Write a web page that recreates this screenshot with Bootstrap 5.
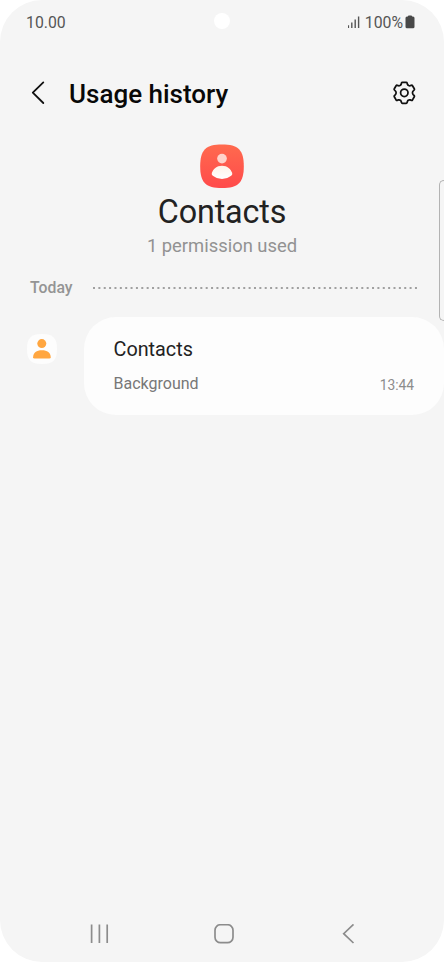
<!DOCTYPE html>
<html lang="en">
<head>
<meta charset="utf-8">
<meta name="viewport" content="width=device-width, initial-scale=1">
<title>Usage history</title>
<link rel="stylesheet" href="https://cdn.jsdelivr.net/npm/bootstrap@5.3.0/dist/css/bootstrap.min.css">
<style>
body{background:#fff;font-family:Roboto,sans-serif;color:#222}
svg{display:block;flex:none}
.screen{width:444px;height:962px;background:#f5f5f5;border-radius:42px}
.status-bar{height:43px;padding:1px 29px 0 26px;font-size:15.8px;line-height:20px;color:#555}
.clock,.status-level{padding-top:1px}
.status-level{margin:0 2px 0 5px}
.camera{width:16px;height:16px;left:214px;top:13px}
.title-bar{height:60px;margin-top:20px;padding:0 28px 0 31px}
.title-bar h1{font-size:26px;line-height:30px;color:#080808;margin-left:24px;padding-top:1px}
.app-icon{margin-top:21px}
.app-name{font-size:32.3px;line-height:40px;letter-spacing:-.15px;margin-top:4px}
.app-note{font-size:18.4px;line-height:24px;color:#929292;margin-top:2px}
.day-row{height:24px;margin-top:18px;padding:0 27px 0 30px}
.day-label{font-size:15.8px;line-height:24px;color:#949494}
.entry-row{margin-top:17px;padding-left:27px}
.entry-icon{margin-top:17px}
.entry{width:360px;height:98px;border-radius:32px;background:#fdfdfd;padding:20px 30px 0 29.5px}
.entry-name{font-size:19.8px;line-height:26px}
.entry-detail{margin-top:11px}
.entry-kind{font-size:16px;line-height:20px;color:#777}
.entry-time{font-size:13.8px;line-height:20px;color:#8c8c8c;padding-top:1px}
.edge-handle{width:5px;height:141px;left:439px;top:180px;border:1px solid #b3b3b3;border-right:0;border-radius:6px 0 0 6px}
.nav-keys{height:56px;padding:0 89px}
.home-key{margin-right:4px}
</style>
</head>
<body>
<main class="screen position-relative overflow-hidden d-flex flex-column">
  <div class="status-bar d-flex align-items-center justify-content-between">
    <span class="clock">10.00</span>
    <div class="d-flex align-items-center">
      <svg width="12" height="13" viewBox="0 0 12 13" stroke="#555" stroke-width="1.4"><path d="M.4 9.2V12M3.800 6.500V12M7.200 3.500V12M10.600 .5V12"/></svg>
      <span class="status-level">100%</span>
      <svg width="10" height="14" viewBox="0 0 10 14" fill="#484848"><path d="M3 1.2Q3 .4 3.8 .4H6.2Q7 .4 7 1.2V1.6H8Q9.5 1.6 9.5 3.1V11.7Q9.5 13.2 8 13.2H2Q.5 13.2 .5 11.7V3.1Q.5 1.6 2 1.6H3Z"/></svg>
    </div>
  </div>
  <span class="camera position-absolute rounded-circle bg-white"></span>
  <header class="title-bar d-flex align-items-center">
    <svg width="14" height="24" viewBox="0 0 14 24" fill="none" stroke="#111" stroke-width="1.8" stroke-linecap="round" stroke-linejoin="round"><path d="M12.3 1.4L1.8 11.7L12.3 22"/></svg>
    <h1 class="fw-medium mb-0 me-auto">Usage history</h1>
    <svg width="24" height="24" viewBox="-12.3 -11.800 24 24" fill="none" stroke="#111" stroke-width="1.75" stroke-linejoin="round"><circle r="3.7"/><path d="M-1.9-10.5H1.9Q2.6-10.5 2.8-9.8L3.2-8.4Q3.5-7.6 4.3-7.3Q5.1-6.9 5.9-7.1L7.1-7.5Q7.8-7.7 8.2-7.1L10-4Q10.4-3.3 9.9-2.8L8.9-1.8Q8.2-1 8.2 0Q8.2 1 8.9 1.8L9.9 2.8Q10.4 3.3 10 4L8.2 7.1Q7.8 7.7 7.1 7.5L5.9 7.1Q5.1 6.9 4.3 7.3Q3.5 7.6 3.2 8.4L2.8 9.8Q2.6 10.5 1.9 10.5H-1.9Q-2.6 10.5-2.8 9.8L-3.2 8.4Q-3.5 7.6-4.3 7.3Q-5.1 6.9-5.9 7.1L-7.1 7.5Q-7.8 7.7-8.2 7.1L-10 4Q-10.4 3.3-9.9 2.8L-8.9 1.8Q-8.2 1-8.2 0Q-8.2-1-8.9-1.8L-9.9-2.8Q-10.4-3.3-10-4L-8.2-7.1Q-7.8-7.7-7.1-7.5L-5.9-7.1Q-5.1-6.9-4.3-7.3Q-3.5-7.6-3.2-8.4L-2.8-9.8Q-2.6-10.5-1.9-10.5Z"/></svg>
  </header>
  <section class="d-flex flex-column align-items-center text-center">
    <svg class="app-icon" width="44" height="44" viewBox="0 -.4 44 44.400">
      <defs>
        <linearGradient id="coral" x2="0" y2="1"><stop stop-color="#ff6a4e"/><stop offset="1" stop-color="#ff4a4b"/></linearGradient>
        <linearGradient id="cream" x2="0" y2="1"><stop stop-color="#fff3e8"/><stop offset="1" stop-color="#fff"/></linearGradient>
      </defs>
      <path fill="url(#coral)" d="M22 0C38.500 0 44 5.500 44 22S38.500 44 22 44S0 38.500 0 22S5.500 0 22 0Z"/>
      <circle cx="22" cy="14.300" r="4.900" fill="#ffd3ca"/>
      <path fill="url(#cream)" d="M22 21.500C27.500 21.500 31 25 32.300 28.900Q32.800 30.400 31.300 31.600Q27 35 22 35T12.700 31.600Q11.200 30.400 11.700 28.900C13 25 16.500 21.500 22 21.500Z"/>
    </svg>
    <div class="app-name">Contacts</div>
    <div class="app-note">1 permission used</div>
  </section>
  <div class="day-row d-flex align-items-center justify-content-between">
    <span class="day-label fw-medium">Today</span>
    <svg width="324" height="2" viewBox="0 0 324 2"><path d="M0 1H324" stroke="#a0a0a0" stroke-width="2" stroke-dasharray="2 3.366"/></svg>
  </div>
  <div class="entry-row d-flex justify-content-between align-items-start">
    <svg class="entry-icon" width="30" height="30" viewBox="0 0 30 30"><path fill="#fdfdfd" d="M15 0C26 0 30 4 30 15S26 30 15 30S0 26 0 15S4 0 15 0Z"/><g fill="#ffa640"><circle cx="14.800" cy="9.600" r="4.500"/><path d="M6.100 23.200C6.100 18.800 9.600 16.200 14.900 16.200S23.700 18.800 23.700 23.200Q23.700 24.600 22.300 24.600H7.500Q6.100 24.600 6.100 23.200Z"/></g></svg>
    <article class="entry">
      <div class="entry-name">Contacts</div>
      <div class="entry-detail d-flex justify-content-between">
        <span class="entry-kind">Background</span>
        <span class="entry-time">13:44</span>
      </div>
    </article>
  </div>
  <span class="edge-handle position-absolute"></span>
  <nav class="nav-keys mt-auto d-flex align-items-center justify-content-between">
    <svg width="20" height="20" viewBox="0 0 20 20" stroke="#8c8c8c" stroke-width="1.700"><path d="M2.600.5V19M10.400.5V19M18.200.5V19"/></svg>
    <svg class="home-key" width="20" height="20" viewBox="0 0 20 20" fill="none" stroke="#8c8c8c" stroke-width="1.700"><rect x="1" y=".7" width="18" height="18" rx="5.500"/></svg>
    <svg width="13" height="20" viewBox="0 0 13 20" fill="none" stroke="#8c8c8c" stroke-width="1.700"><path d="M11.500.4L1.700 9.700L11.500 19"/></svg>
  </nav>
</main>
<script src="https://cdn.jsdelivr.net/npm/bootstrap@5.3.0/dist/js/bootstrap.bundle.min.js"></script>
</body>
</html>
